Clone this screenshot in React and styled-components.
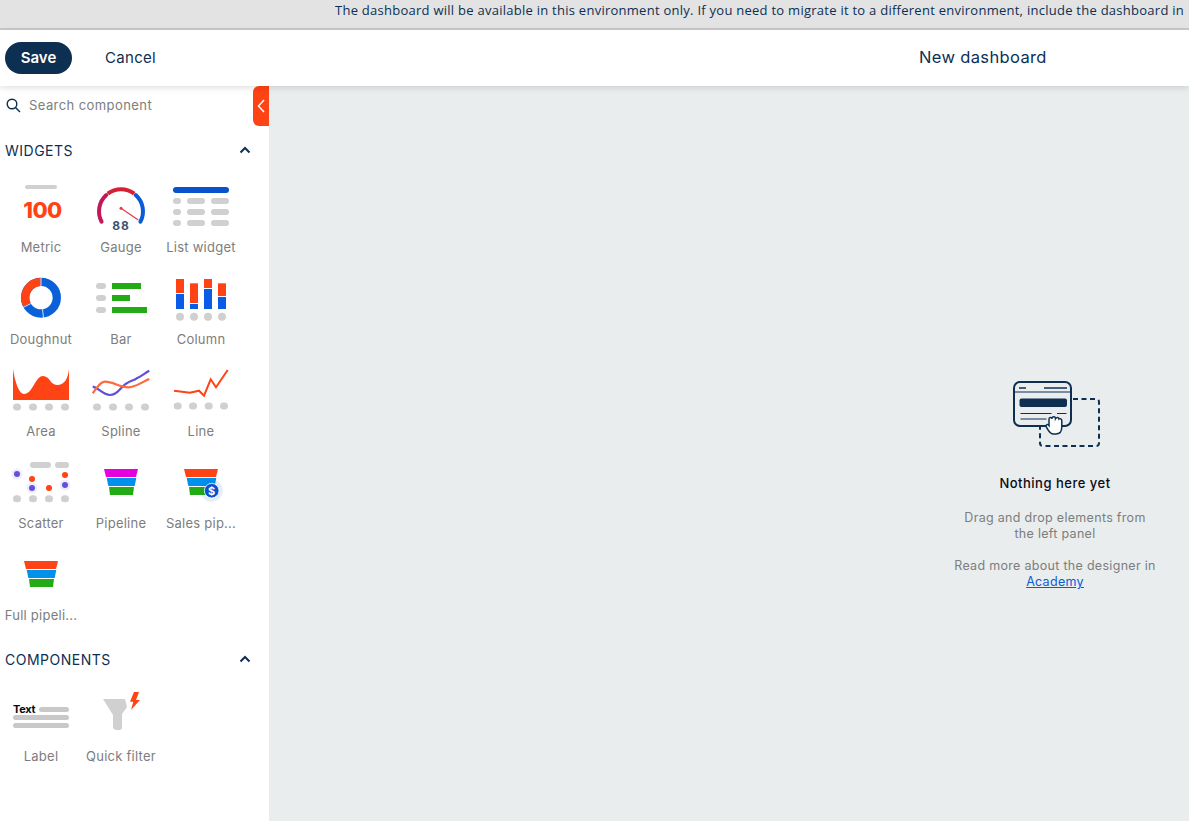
import React from 'react'
import styled, { createGlobalStyle } from 'styled-components'

const GlobalStyle = createGlobalStyle`
  html, body {
    margin: 0;
    height: 100%;
    overflow: hidden;
  }
  body {
    font-family: Inter, "Open Sans", sans-serif;
    color: #0d2f52;
  }
`;

const Page = styled.div`
  height: 821px;
  display: flex;
  flex-direction: column;
  background: #e9edee;
`;

const Banner = styled.div`
  height: 20px;
  flex: none;
  background: #e3e3e3;
  border-bottom: 2px solid #c8c8c8;
  display: flex;
  align-items: center;
  padding: 0 0 8px 335px;
  white-space: nowrap;
  font-family: "Open Sans", sans-serif;
  font-size: 13px;
  letter-spacing: 0.26px;
  color: #0d2f52;
`;

const Toolbar = styled.div`
  height: 56px;
  flex: none;
  background: #fff;
  box-shadow: 0 2px 6px rgba(0, 0, 0, 0.12);
  position: relative;
  z-index: 2;
  display: flex;
  align-items: center;
  padding-left: 5px;
`;

const SaveButton = styled.button`
  width: 67px;
  height: 32px;
  border: 0;
  border-radius: 16px;
  background: #0d2f52;
  color: #fff;
  padding: 0 0 1px;
  font: 600 15px Inter, sans-serif;
`;

const CancelButton = styled.button`
  border: 0;
  background: none;
  padding: 0 0 1px;
  margin-left: 33px;
  color: #0d2f52;
  font: 400 15px Inter, sans-serif;
  letter-spacing: 0.3px;
`;

const ToolbarTitle = styled.div`
  position: absolute;
  left: 919px;
  top: 17px;
  font-size: 16.5px;
  letter-spacing: 0.35px;
  line-height: 20px;
`;

const Body = styled.div`
  flex: 1;
  display: flex;
  min-height: 0;
`;

const Sidebar = styled.aside`
  width: 269px;
  flex: none;
  background: #fff;
  position: relative;
  padding-top: 9px;
  box-sizing: border-box;
`;

const CollapseTab = styled.div`
  position: absolute;
  right: 0;
  top: 0;
  width: 16px;
  height: 40px;
  background: #ff4314;
  border-radius: 6px 0 0 6px;
  display: flex;
  align-items: center;
  justify-content: center;
`;

const SearchRow = styled.div`
  display: flex;
  align-items: center;
  gap: 8px;
  height: 20px;
  padding-left: 6px;
  font-size: 13px;
  letter-spacing: 0.42px;
  color: #7d7d7d;
`;

const SectionHead = styled.div`
  display: flex;
  justify-content: space-between;
  align-items: center;
  height: 20px;
  margin-top: ${p => p.$top}px;
  padding: 0 17px 0 5px;
  font-size: 14px;
  line-height: 19px;
  letter-spacing: 0.5px;
  color: #0d2f52;
`;

const WidgetGrid = styled.div`
  display: grid;
  grid-template-columns: repeat(3, 80px);
  grid-auto-rows: 92px;
  margin-top: 22px;
  padding-left: 1px;
`;

const Tile = styled.div`
  display: flex;
  flex-direction: column;
  align-items: center;
  width: 80px;
`;

const TileIcon = styled.svg`
  width: 64px;
  height: 56px;
  display: block;
`;

const TileLabel = styled.div`
  width: 76px;
  text-align: center;
  font-size: 13px;
  line-height: 18px;
  letter-spacing: 0.25px;
  color: #7d7d7d;
  white-space: nowrap;
`;

const Canvas = styled.main`
  flex: 1;
  display: flex;
  justify-content: flex-end;
  padding-right: 22px;
`;

const EmptyState = styled.div`
  width: 224px;
  margin-top: 295px;
  display: flex;
  flex-direction: column;
  align-items: center;
  text-align: center;
`;

const Illustration = styled.svg`
  width: 88px;
  height: 68px;
  margin-left: 3px;
  display: block;
`;

const EmptyTitle = styled.div`
  margin-top: 25px;
  font-size: 13px;
  font-weight: 450;
  line-height: 18px;
  letter-spacing: 0.5px;
  color: #0a0a14;
`;

const EmptyText = styled.p`
  margin: ${p => p.$top}px 0 0;
  width: ${p => p.$width}px;
  font-size: 12.5px;
  line-height: 16px;
  letter-spacing: 0.3px;
  color: #7d7d7d;
`;

const AcademyLink = styled.a`
  color: #0a5bd6;
  text-decoration: underline;
`;

const Chevron = () => (
  <svg width="14" height="14" viewBox="0 0 14 14" fill="none" stroke="#0d2f52" strokeWidth="2">
    <path d="M2.5 9.5 7 5l4.5 4.5" />
  </svg>
)

const grey = '#d0d0d0'

const Dots = ({ y, xs, r = 4 }) => xs.map(x => (
  <rect key={x} x={x - r} y={y - 3.5} width={r * 2} height="7" rx="3.5" fill={grey} />
))

const columns = [
  [7, 5, 14, 20, 15],
  [21, 9.3, 19.7, 30, 5],
  [35, 5, 9, 15, 20],
  [49, 9.3, 12.7, 23, 12],
]

const icons = {
  metric: (
    <>
      <rect x="16" y="3" width="32" height="4" rx="2" fill={grey} />
      <text x="33.5" y="36" textAnchor="middle" fontFamily="Inter, sans-serif" fontWeight="800" fontSize="22" letterSpacing="-0.5" fill="#ff4314">100</text>
    </>
  ),
  gauge: (
    <>
      <path d="M12.6 39.7A22 22 0 0 1 17.3 13" fill="none" stroke="#c2185b" strokeWidth="4" strokeLinecap="round" />
      <path d="M18.8 11.7A22 22 0 0 1 45.2 11.7" fill="none" stroke="#d81e34" strokeWidth="4" />
      <path d="M46.7 13A22 22 0 0 1 51.4 39.7" fill="none" stroke="#0a5bd6" strokeWidth="4" strokeLinecap="round" />
      <path d="M32 26.3 49.3 38" stroke="#e53945" strokeWidth="1.2" />
      <circle cx="32" cy="26.3" r="1.5" fill="#e53945" />
      <text x="32" y="47.5" textAnchor="middle" fontFamily="Inter, sans-serif" fontWeight="700" fontSize="12" letterSpacing="1" fill="#3a5570">88</text>
    </>
  ),
  list: (
    <>
      <rect x="4" y="5" width="56" height="6" rx="3" fill="#0a52cc" />
      {[16, 27, 38].map(y => (
        <g key={y} fill={grey}>
          <rect x="4" y={y} width="8" height="6" rx="3" />
          <rect x="18" y={y} width="18" height="6" rx="3" />
          <rect x="42" y={y} width="18" height="6" rx="3" />
        </g>
      ))}
    </>
  ),
  doughnut: (
    <>
      <circle cx="32" cy="23.7" r="15.8" fill="none" stroke="#0a60d8" strokeWidth="8.3" />
      <path d="M17.9 30.9A15.8 15.8 0 0 1 31.7 7.9" fill="none" stroke="#ff4314" strokeWidth="8.3" />
      <path d="M32 3.5V12M14 33.5 22 29.5M33.5 35.3 34.5 44" stroke="#fff" strokeWidth="0.8" />
    </>
  ),
  bar: (
    <>
      {[9, 21, 33].map(y => <rect key={y} x="7" y={y} width="10" height="6" rx="3" fill={grey} />)}
      <rect x="23" y="9" width="29" height="6" fill="#22ab14" />
      <rect x="23" y="21" width="18" height="6" fill="#22ab14" />
      <rect x="23" y="33" width="35" height="6" fill="#22ab14" />
    </>
  ),
  column: (
    <>
      {columns.map(([x, y, h, y2, h2]) => (
        <g key={x}>
          <rect x={x} y={y} width="8" height={h} fill="#ff4314" />
          <rect x={x} y={y2} width="8" height={h2} fill="#0a5be6" />
        </g>
      ))}
      {[11, 25, 39, 53].map(x => <circle key={x} cx={x} cy="42.7" r="4" fill={grey} />)}
    </>
  ),
  area: (
    <>
      <path d="M4 3C6 16 10 28 15 28C24 28 26 10 34 10C41 10 41 19 48 19C56 19 59 12 60 3V34H4z" fill="#ff4314" />
      <Dots y={41} xs={[8, 24, 40, 56]} />
    </>
  ),
  spline: (
    <>
      <path d="M3.7 20.7C10 22 14 29 21 29C29 29 31 21 37.7 17.3C42 14.5 45 14.5 47.7 12.3C52 10.5 56 7 60.3 4.7" fill="none" stroke="#6250d8" strokeWidth="2.2" />
      <path d="M3.7 27.3C8 22 11 15.7 16 15.7C24 15.7 31 21.3 39.3 21.3C47 21.3 53 16 60.3 13" fill="none" stroke="#ff6a3d" strokeWidth="2.2" />
      <Dots y={41} xs={[8, 24, 40, 56]} />
    </>
  ),
  line: (
    <>
      <path d="M5 24.7 21 26.7 30 24.7 35 29.7 41.7 13.3 47 21.3 58.7 4" fill="none" stroke="#ff4314" strokeWidth="2" />
      <Dots y={40} xs={[8.7, 24, 39.7, 55]} />
    </>
  ),
  scatter: (
    <>
      <rect x="21" y="4" width="21" height="6" rx="3" fill={grey} />
      <rect x="46" y="4" width="14" height="6" rx="3" fill={grey} />
      {[[8, 16], [23, 30], [56, 27]].map(([x, y]) => (
        <g key={x} fill="#6250d8">
          <circle cx={x} cy={y} r="5.5" opacity="0.1" />
          <circle cx={x} cy={y} r="3" />
        </g>
      ))}
      {[[23, 21], [40, 30], [56, 17]].map(([x, y]) => <circle key={x} cx={x} cy={y} r="3" fill="#ff4314" />)}
      <Dots y={40.7} xs={[8, 24, 40, 56]} />
    </>
  ),
}

const FunnelIcon = ({ top, badge }) => (
  <TileIcon viewBox="0 0 64 56">
    <path d="M15 11h34l-2 8H17z" fill={top} />
    <path d="M17.7 20h29.6l-1.6 8H19.3z" fill="#0091ea" />
    <path d="M20 29h25l-1 8H21z" fill="#22ab14" />
    {badge && (
      <>
        <circle cx="42.7" cy="32.7" r="11" fill="#0a52cc" opacity="0.1" />
        <circle cx="42.7" cy="32.7" r="7.3" fill="#0a52cc" stroke="#fff" strokeWidth="0.8" />
        <text x="42.7" y="36.7" textAnchor="middle" fontFamily="Inter, sans-serif" fontWeight="700" fontSize="11" fill="#fff">$</text>
      </>
    )}
  </TileIcon>
)

const ChartIcon = ({ name }) => (
  <TileIcon viewBox="0 0 64 56">{icons[name]}</TileIcon>
)

const widgets = [
  ['Metric', <ChartIcon name="metric" />],
  ['Gauge', <ChartIcon name="gauge" />],
  ['List widget', <ChartIcon name="list" />],
  ['Doughnut', <ChartIcon name="doughnut" />],
  ['Bar', <ChartIcon name="bar" />],
  ['Column', <ChartIcon name="column" />],
  ['Area', <ChartIcon name="area" />],
  ['Spline', <ChartIcon name="spline" />],
  ['Line', <ChartIcon name="line" />],
  ['Scatter', <ChartIcon name="scatter" />],
  ['Pipeline', <FunnelIcon top="#e600e0" />],
  ['Sales pip...', <FunnelIcon top="#ff4314" badge />],
  ['Full pipeli...', <FunnelIcon top="#ff4314" />],
]

const LabelIcon = () => (
  <TileIcon viewBox="0 0 64 56">
    <text x="4" y="21.7" fontFamily="Inter, sans-serif" fontWeight="700" fontSize="11" letterSpacing="-0.3" fill="#0a0a14">Text</text>
    <rect x="30" y="16" width="30" height="5" rx="2.5" fill="#c8c8c8" />
    <rect x="4" y="24" width="56" height="5" rx="2.5" fill="#c8c8c8" />
    <rect x="4" y="32" width="56" height="5" rx="2.5" fill="#c8c8c8" />
  </TileIcon>
)

const QuickFilterIcon = () => (
  <TileIcon viewBox="0 0 64 56">
    <path d="M14 8H36L38 16L33 23V37C33 40 24 40 24 36V24z" fill={grey} />
    <path d="M45 1H50L47 9H51L42 19L44.3 10.7H41z" fill="#ff4314" />
  </TileIcon>
)

const EmptyIllustration = () => (
  <Illustration viewBox="0 0 88 68" fill="none" stroke="#0d2f52">
    <path d="M60 18H83q3 0 3 3V62q0 3-3 3H30q-3 0-3-3V46" strokeWidth="2" strokeDasharray="5 3.5" />
    <rect x="1" y="1" width="57" height="44" rx="6" fill="#e9edee" strokeWidth="2" />
    <path d="M1 11h57" strokeWidth="1.2" />
    <path d="M6 7h7M31 7h23" strokeWidth="1.5" />
    <rect x="6.5" y="17.5" width="47.5" height="8.5" rx="2" fill="#0d2f52" stroke="none" />
    <path d="M7.5 32.5h31M44 32.5h9.5M7.5 38h26" strokeWidth="1.2" />
    <path d="M36 38.5c0-2.5 2.5-2.5 3-.8c0-2.5 3.5-2.5 3.500 0c1-1.800 3.500-1.500 3.500.3c1-.8 2.800 0 2.800 1.800v6.200c0 4-2 7-6 7h-2.500c-3 0-4-2-5.500-4.500l-1.800-3c-.5-2 1.800-2.500 3-1z" fill="#fff" strokeWidth="1.5" />
  </Illustration>
)

export default function App() {
  return (
    <Page>
      <GlobalStyle />
      <Banner>The dashboard will be available in this environment only. If you need to migrate it to a different environment, include the dashboard in</Banner>
      <Toolbar>
        <SaveButton>Save</SaveButton>
        <CancelButton>Cancel</CancelButton>
        <ToolbarTitle>New dashboard</ToolbarTitle>
      </Toolbar>
      <Body>
        <Sidebar>
          <CollapseTab>
            <svg width="9" height="14" viewBox="0 0 9 14" fill="none" stroke="#fff" strokeWidth="1.5">
              <path d="M7 1 1.5 7 7 13" />
            </svg>
          </CollapseTab>
          <SearchRow>
            <svg width="15" height="15" viewBox="0 0 15 15" fill="none" stroke="#0d2f52" strokeWidth="1.4">
              <circle cx="6" cy="6" r="4.8" />
              <path d="m9.5 9.5 4.5 4.5" />
            </svg>
            Search component
          </SearchRow>
          <SectionHead $top={25}>WIDGETS <Chevron /></SectionHead>
          <WidgetGrid>
            {widgets.map(([label, icon]) => (
              <Tile key={label}>
                {icon}
                <TileLabel>{label}</TileLabel>
              </Tile>
            ))}
          </WidgetGrid>
          <SectionHead $top={7}>COMPONENTS <Chevron /></SectionHead>
          <WidgetGrid>
            <Tile><LabelIcon /><TileLabel>Label</TileLabel></Tile>
            <Tile><QuickFilterIcon /><TileLabel>Quick filter</TileLabel></Tile>
          </WidgetGrid>
        </Sidebar>
        <Canvas>
          <EmptyState>
            <EmptyIllustration />
            <EmptyTitle>Nothing here yet</EmptyTitle>
            <EmptyText $top={18} $width={196}>Drag and drop elements from the left panel</EmptyText>
            <EmptyText $top={16} $width={215}>Read more about the designer in <AcademyLink href="#">Academy</AcademyLink></EmptyText>
          </EmptyState>
        </Canvas>
      </Body>
    </Page>
  )
}
